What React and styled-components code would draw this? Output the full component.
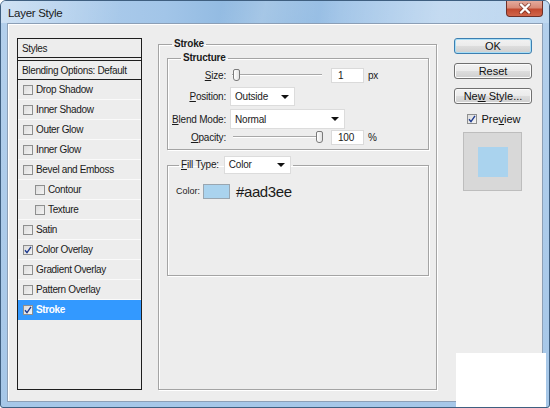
import React from "react";
import styled, { createGlobalStyle } from "styled-components";

const GlobalStyle = createGlobalStyle`
  html, body {
    margin: 0;
    padding: 0;
    background: #ffffff;
  }
  body {
    font-family: "Liberation Sans", Arial, sans-serif;
  }
`;

const Window = styled.div`
  position: relative;
  box-sizing: border-box;
  width: 550px;
  height: 408px;
  display: flex;
  flex-direction: column;
  border: 1px solid #3f5f80;
  border-radius: 6px 6px 3px 3px;
  background: linear-gradient(180deg, #b4d0ec 0%, #a6c7e8 100%);
  overflow: hidden;
`;

const TitleBar = styled.div`
  height: 22px;
  display: flex;
  align-items: flex-start;
  justify-content: space-between;
  padding-left: 7px;
  background:
    linear-gradient(100deg, rgba(255,255,255,0.35) 0%, rgba(255,255,255,0) 22%, rgba(255,255,255,0) 40%, rgba(255,255,255,0.25) 48%, rgba(255,255,255,0) 58%, rgba(255,255,255,0.3) 80%, rgba(255,255,255,0.1) 100%),
    linear-gradient(90deg, #b6d2ee 0%, #a2c5e8 30%, #88b4de 48%, #9fc3e7 62%, #b8d4ef 100%);
`;

const Title = styled.span`
  margin-top: 6px;
  font-size: 11.5px;
  letter-spacing: -0.3px;
  color: #1a1a1a;
`;

const CloseButton = styled.div`
  width: 37px;
  height: 16px;
  margin-right: 6px;
  box-sizing: border-box;
  border: 1px solid #6e3028;
  border-top: none;
  border-radius: 0 0 4px 4px;
  background: linear-gradient(180deg, #e4aa9c 0%, #d88b78 45%, #c24a30 55%, #d0654a 100%);
  display: flex;
  align-items: center;
  justify-content: center;
`;

const Client = styled.div`
  flex: 1;
  display: flex;
  align-items: flex-start;
  margin: 0 6px 5px 6px;
  padding: 12px 0 0 9px;
  background: #ededed;
  border: 1px solid #8c9fb6;
  box-shadow: inset 1px 1px 0 #ffffff;
`;

const StyleList = styled.div`
  box-sizing: border-box;
  width: 125px;
  height: 352px;
  margin-top: 2px;
  border: 1px solid #1e1e1e;
  background: #ededed;
  display: flex;
  flex-direction: column;
  font-size: 10px;
  letter-spacing: -0.35px;
  color: #1a1a1a;
`;

const ListHeader = styled.div`
  height: 18px;
  display: flex;
  align-items: center;
  padding-left: 4px;
  border-bottom: 1px solid #1e1e1e;
  margin-bottom: 2px;
`;

const ListBlending = styled.div`
  height: 18px;
  display: flex;
  align-items: center;
  padding-left: 4px;
  border-top: 1px solid #1e1e1e;
  border-bottom: 1px solid #1e1e1e;
`;

const ListRow = styled.div`
  box-sizing: border-box;
  height: 20px;
  display: flex;
  align-items: center;
  gap: 3px;
  padding-left: ${(p) => (p.$indent ? 17 : 5)}px;
  border-bottom: 1px solid ${(p) => (p.$active ? "#3399ff" : "#fafafa")};
  background: ${(p) => (p.$active ? "#3399ff" : "transparent")};
  color: ${(p) => (p.$active ? "#ffffff" : "#1a1a1a")};
  font-weight: ${(p) => (p.$active ? "bold" : "normal")};
`;

const Box = styled.span`
  box-sizing: border-box;
  width: 10px;
  height: 10px;
  flex: none;
  border: 1px solid #8e8f8f;
  background: linear-gradient(135deg, #dcdcdc 0%, #f4f4f4 100%);
  display: flex;
  align-items: center;
  justify-content: center;
`;

const CheckMark = () => (
  <svg width="8" height="8" viewBox="0 0 8 8">
    <path d="M1 4.2 L3 6.6 L7 0.8" fill="none" stroke="#1d3a8f" strokeWidth="1.4" />
  </svg>
);

function CheckBox({ checked }) {
  return <Box>{checked && <CheckMark />}</Box>;
}

const Middle = styled.div`
  margin-left: 16px;
  margin-top: 2px;
  width: 279px;
`;

const Group = styled.fieldset`
  box-sizing: border-box;
  margin: 0;
  padding: ${(p) => p.$pad || "0"};
  height: ${(p) => p.$height}px;
  border: 1px solid #a4a4a4;
  box-shadow: 1px 1px 0 #ffffff, inset 1px 1px 0 #ffffff;
  min-width: 0;
`;

const Legend = styled.legend`
  margin-left: ${(p) => p.$left || 13}px;
  padding: 0 2px;
  font-size: 10px;
  line-height: 12px;
  font-weight: ${(p) => (p.$bold ? "bold" : "normal")};
  letter-spacing: -0.2px;
  color: #1a1a1a;
  display: flex;
  align-items: center;
  gap: 5px;
`;

const InnerGroup = styled(Group)`
  margin-top: ${(p) => p.$top || 0}px;
  width: 262px;
`;

const Rows = styled.div`
  display: flex;
  flex-direction: column;
  padding-top: 3px;
`;

const Row = styled.div`
  height: ${(p) => p.$h}px;
  margin-top: ${(p) => p.$mt || 0}px;
  display: flex;
  align-items: center;
  font-size: 10px;
  letter-spacing: -0.2px;
  color: #1a1a1a;
`;

const Label = styled.span`
  width: 58px;
  text-align: right;
  flex: none;
`;

const Slider = styled.div`
  position: relative;
  margin-left: ${(p) => p.$ml}px;
  width: 90px;
  height: 14px;
  display: flex;
  align-items: center;
`;

const Track = styled.div`
  width: 100%;
  height: 1px;
  background: #a8a8a8;
  border-bottom: 1px solid #ffffff;
`;

const Thumb = styled.div`
  position: absolute;
  top: 1px;
  left: ${(p) => p.$pos}px;
  box-sizing: border-box;
  width: 7px;
  height: 12px;
  border: 1px solid #7a7a7a;
  border-radius: 2px 2px 3px 3px;
  background: linear-gradient(90deg, #ffffff 0%, #e2e2e2 100%);
`;

const NumInput = styled.div`
  box-sizing: border-box;
  margin-left: ${(p) => p.$ml}px;
  width: 33px;
  height: 15px;
  background: #ffffff;
  border: 1px solid #dadada;
  padding-left: 6px;
  display: flex;
  align-items: center;
`;

const Unit = styled.span`
  margin-left: 4px;
`;

const Select = styled.div`
  box-sizing: border-box;
  width: ${(p) => p.$w}px;
  height: ${(p) => p.$h || 19}px;
  margin-left: ${(p) => p.$ml || 0}px;
  background: #ffffff;
  border: 1px solid #dcdcdc;
  padding: 0 5px 0 4px;
  display: flex;
  align-items: center;
  justify-content: space-between;
  font-size: 10px;
  font-weight: normal;
  color: #1a1a1a;
`;

const Arrow = styled.span`
  width: 0;
  height: 0;
  border-left: 4px solid transparent;
  border-right: 4px solid transparent;
  border-top: 4px solid #111111;
`;

const ColorRow = styled.div`
  margin-top: 9px;
  padding-left: 8px;
  height: 16px;
  display: flex;
  align-items: center;
  font-size: 9px;
  color: #1a1a1a;
`;

const Swatch = styled.div`
  width: 27px;
  height: 15px;
  margin-left: 3px;
  box-sizing: border-box;
  border: 1px solid #9aa6b0;
  background: ${(p) => p.$color};
`;

const HexText = styled.span`
  margin-left: 6px;
  font-size: 15px;
  letter-spacing: -0.4px;
  color: #1a1a1a;
`;

const Side = styled.div`
  margin-left: 17px;
  width: 78px;
  padding-top: 2px;
  display: flex;
  flex-direction: column;
  align-items: stretch;
  gap: 9px;
`;

const Button = styled.div`
  box-sizing: border-box;
  height: 16px;
  border: 1px solid ${(p) => (p.$primary ? "#3c7fb1" : "#707070")};
  border-radius: 3px;
  background: linear-gradient(180deg, #f2f2f2 0%, #ebebeb 48%, #dddddd 52%, #cfcfcf 100%);
  box-shadow: inset 0 0 0 1px ${(p) => (p.$primary ? "#a8def6" : "#fbfbfb")};
  display: flex;
  align-items: center;
  justify-content: center;
  font-size: 11px;
  color: #111111;
`;

const PreviewToggle = styled.div`
  height: 12px;
  display: flex;
  align-items: center;
  justify-content: center;
  gap: 4px;
  font-size: 11px;
  color: #111111;
  margin-left: 2px;
`;

const PreviewBox = styled.div`
  align-self: center;
  margin-top: -2px;
  margin-left: -1px;
  box-sizing: border-box;
  width: 59px;
  height: 59px;
  border: 1px solid #bdbdbd;
  background: #d8d8d8;
  display: flex;
  align-items: center;
  justify-content: center;
`;

const PreviewSwatch = styled.div`
  width: 30px;
  height: 30px;
  background: #aad3ee;
`;

const Blank = styled.div`
  position: absolute;
  left: 455px;
  top: 352px;
  width: 90px;
  height: 56px;
  background: #ffffff;
`;

const styles = [
  { name: "Drop Shadow" },
  { name: "Inner Shadow" },
  { name: "Outer Glow" },
  { name: "Inner Glow" },
  { name: "Bevel and Emboss" },
  { name: "Contour", indent: true },
  { name: "Texture", indent: true },
  { name: "Satin" },
  { name: "Color Overlay", checked: true },
  { name: "Gradient Overlay" },
  { name: "Pattern Overlay" },
  { name: "Stroke", checked: true, active: true },
];

export default function App() {
  return (
    <>
      <GlobalStyle />
      <Window>
        <TitleBar>
          <Title>Layer Style</Title>
          <CloseButton>
            <svg width="14" height="11" viewBox="0 0 14 11">
              <path d="M3 1.5 L11 9.5 M11 1.5 L3 9.5" stroke="#5a1d14" strokeWidth="4" strokeLinecap="round" opacity="0.55" />
              <path d="M3 1.5 L11 9.5 M11 1.5 L3 9.5" stroke="#ffffff" strokeWidth="2.4" strokeLinecap="round" />
            </svg>
          </CloseButton>
        </TitleBar>
        <Client>
          <StyleList>
            <ListHeader>Styles</ListHeader>
            <ListBlending>Blending Options: Default</ListBlending>
            {styles.map((s) => (
              <ListRow key={s.name} $indent={s.indent} $active={s.active}>
                <CheckBox checked={s.checked} />
                {s.name}
              </ListRow>
            ))}
          </StyleList>

          <Middle>
            <Group $height={352} $pad="2px 8px 0 8px">
              <Legend $bold $left={5}>Stroke</Legend>
              <InnerGroup $height={98}>
                <Legend $bold>Structure</Legend>
                <Rows>
                  <Row $h={16}>
                    <Label><u>S</u>ize:</Label>
                    <Slider $ml={6}>
                      <Track />
                      <Thumb $pos={1} />
                    </Slider>
                    <NumInput $ml={9}>1</NumInput>
                    <Unit>px</Unit>
                  </Row>
                  <Row $h={19} $mt={4}>
                    <Label><u>P</u>osition:</Label>
                    <Select $w={65} $ml={4}>Outside<Arrow /></Select>
                  </Row>
                  <Row $h={20} $mt={3}>
                    <Label><u>B</u>lend Mode:</Label>
                    <Select $w={115} $h={20} $ml={4}>Normal<Arrow /></Select>
                  </Row>
                  <Row $h={16}>
                    <Label><u>O</u>pacity:</Label>
                    <Slider $ml={7}>
                      <Track />
                      <Thumb $pos={83} />
                    </Slider>
                    <NumInput $ml={8}>100</NumInput>
                    <Unit>%</Unit>
                  </Row>
                </Rows>
              </InnerGroup>
              <InnerGroup $height={120} $top={6}>
                <Legend $left={11}>
                  <span><u>F</u>ill Type:</span>
                  <Select $w={67} $h={18}>Color<Arrow /></Select>
                </Legend>
                <ColorRow>
                  Color:
                  <Swatch $color="#aad3ee" />
                  <HexText>#aad3ee</HexText>
                </ColorRow>
              </InnerGroup>
            </Group>
          </Middle>

          <Side>
            <Button $primary>OK</Button>
            <Button>Reset</Button>
            <Button><span>Ne<u>w</u> Style...</span></Button>
            <PreviewToggle>
              <CheckBox checked />
              <span>Pre<u>v</u>iew</span>
            </PreviewToggle>
            <PreviewBox>
              <PreviewSwatch />
            </PreviewBox>
          </Side>
        </Client>
        <Blank />
      </Window>
    </>
  );
}
